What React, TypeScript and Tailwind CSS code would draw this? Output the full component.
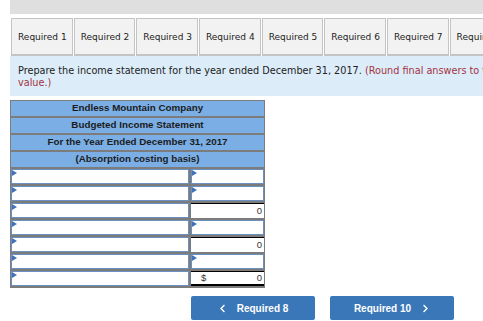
import { FaChevronLeft, FaChevronRight } from 'react-icons/fa'

const tabs = ['Required 1', 'Required 2', 'Required 3', 'Required 4', 'Required 5', 'Required 6', 'Required 7', 'Required 8']

const headers = [
  'Endless Mountain Company',
  'Budgeted Income Statement',
  'For the Year Ended December 31, 2017',
  '(Absorption costing basis)'
]

// right column kind per row: input, total, or final total with $
const rows: ('input' | 'total' | 'final')[] = ['input', 'input', 'total', 'input', 'total', 'input', 'final']

const Flag = () => (
  <span className="absolute left-0 top-0 w-0 h-0 border-t-[3px] border-b-[3px] border-l-[5px] border-t-transparent border-b-transparent border-l-[#3f72b8]" />
)

const InputCell = ({ className }: { className: string }) => (
  <div className={`relative h-[15px] bg-white border border-[#6a90c2] ${className}`}>
    <Flag />
  </div>
)

const App = () => {
  return (
    <div className="w-[483px] h-[321px] overflow-hidden bg-white pl-[10px] font-['DejaVu_Sans',Verdana,sans-serif] text-[#222]">
      <div className="h-[14px] bg-[#dfdfdf]" />

      <div className="flex gap-[1px] mt-[4px] pl-[1px] h-[38px] whitespace-nowrap">
        {tabs.map((t) => (
          <div
            key={t}
            className="h-full flex items-center pt-[3px] pl-[6px] pr-[5px] text-[9px] bg-[#f2f2f2] border border-[#c4c4c4] border-b-2 shrink-0"
          >
            {t}
          </div>
        ))}
      </div>

      <div className="h-[40px] bg-[#dcedf9] pl-[8px] pt-[9px] text-[9.7px] leading-[12px] whitespace-nowrap">
        <div>
          Prepare the income statement for the year ended December 31, 2017.{' '}
          <span className="text-[#a4323f]">(Round final answers to the nearest whole dollar</span>
        </div>
        <div className="text-[#a4323f]">value.)</div>
      </div>

      <div className="mt-[4px] w-[255px] bg-[#7c7c7c] p-[1px] pb-[2px] flex flex-col gap-[2px] font-['Liberation_Sans',Arial,sans-serif]">
        {headers.map((h) => (
          <div
            key={h}
            className="h-[15px] bg-[#7aaee5] flex items-center justify-center text-[9.8px] font-bold text-[#1c1c1c]"
          >
            {h}
          </div>
        ))}
        {rows.map((r, i) => (
          <div key={i} className="flex gap-[2px] h-[15px]">
            <InputCell className="w-[178px]" />
            {r === 'input' ? (
              <InputCell className="flex-1" />
            ) : (
              <div
                className={`flex-1 h-[15px] bg-white border-t border-t-black flex items-center justify-between pl-[10px] pr-[2px] text-[9.5px] text-[#333] ${
                  r === 'final' ? 'border-b-2 border-b-black' : ''
                }`}
              >
                <span>{r === 'final' ? '$' : ''}</span>
                <span>0</span>
              </div>
            )}
          </div>
        ))}
      </div>

      <div className="flex gap-[15px] mt-[8px] ml-[181px] font-['Liberation_Sans',Arial,sans-serif]">
        <button className="w-[124px] h-[24px] rounded-[2px] bg-[#3a77b9] text-white text-[10px] font-bold flex items-center justify-center gap-[10px]">
          <FaChevronLeft className="text-[9px]" />
          Required 8
        </button>
        <button className="w-[124px] h-[24px] rounded-[2px] bg-[#3a77b9] text-white text-[10px] font-bold flex items-center justify-center gap-[10px]">
          Required 10
          <FaChevronRight className="text-[9px]" />
        </button>
      </div>
    </div>
  )
}

export default App
